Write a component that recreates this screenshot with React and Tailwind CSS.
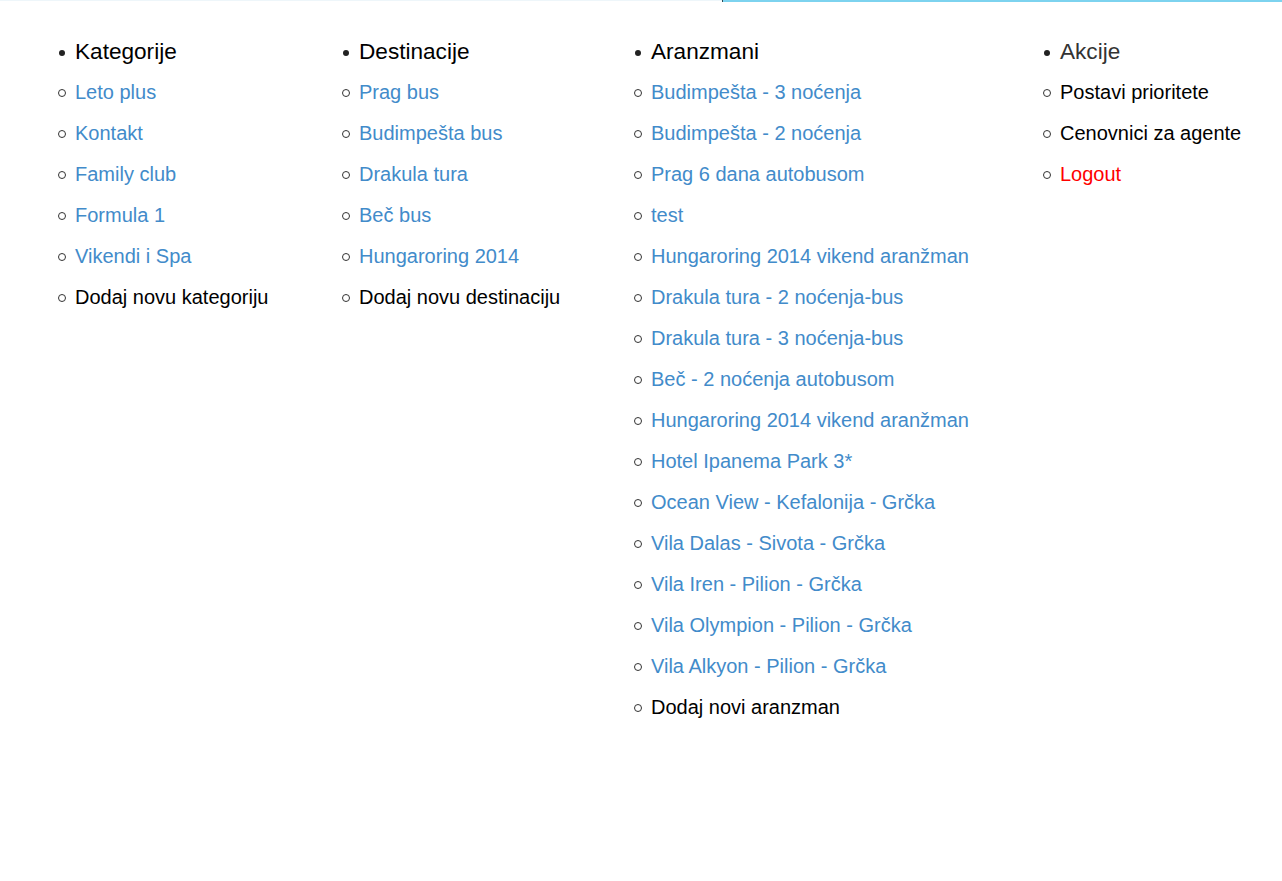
import React from "react";

const columns = [
  {
    title: "Kategorije",
    width: "w-[284px]",
    items: [
      { label: "Leto plus", link: true },
      { label: "Kontakt", link: true },
      { label: "Family club", link: true },
      { label: "Formula 1", link: true },
      { label: "Vikendi i Spa", link: true },
      { label: "Dodaj novu kategoriju" },
    ],
  },
  {
    title: "Destinacije",
    width: "w-[292px]",
    items: [
      { label: "Prag bus", link: true },
      { label: "Budimpešta bus", link: true },
      { label: "Drakula tura", link: true },
      { label: "Beč bus", link: true },
      { label: "Hungaroring 2014", link: true },
      { label: "Dodaj novu destinaciju" },
    ],
  },
  {
    title: "Aranzmani",
    width: "w-[409px]",
    items: [
      { label: "Budimpešta - 3 noćenja", link: true },
      { label: "Budimpešta - 2 noćenja", link: true },
      { label: "Prag 6 dana autobusom", link: true },
      { label: "test", link: true },
      { label: "Hungaroring 2014 vikend aranžman", link: true },
      { label: "Drakula tura - 2 noćenja-bus", link: true },
      { label: "Drakula tura - 3 noćenja-bus", link: true },
      { label: "Beč - 2 noćenja autobusom", link: true },
      { label: "Hungaroring 2014 vikend aranžman", link: true },
      { label: "Hotel Ipanema Park 3*", link: true },
      { label: "Ocean View - Kefalonija - Grčka", link: true },
      { label: "Vila Dalas - Sivota - Grčka", link: true },
      { label: "Vila Iren - Pilion - Grčka", link: true },
      { label: "Vila Olympion - Pilion - Grčka", link: true },
      { label: "Vila Alkyon - Pilion - Grčka", link: true },
      { label: "Dodaj novi aranzman" },
    ],
  },
  {
    title: "Akcije",
    width: "flex-1",
    titleColor: "text-[#333333]",
    items: [
      { label: "Postavi prioritete" },
      { label: "Cenovnici za agente" },
      { label: "Logout", red: true },
    ],
  },
];

const Column = ({ col }) => (
  <ul className={`${col.width} flex flex-col`}>
    <li className="h-[41px] pt-[4px] flex items-center">
      <span className="w-[17px] flex items-center">
        <span className="ml-[1px] w-[6px] h-[6px] rounded-full bg-[#222]"></span>
      </span>
      <span className={`text-[22.6px] leading-none ${col.titleColor || "text-black"}`}>
        {col.title}
      </span>
    </li>
    {col.items.map((item, i) => (
      <li key={i} className="h-[41px] flex items-center">
        <span className="w-[17px] flex items-center">
          <span className="mt-[2px] w-[8px] h-[8px] rounded-full border border-[#333]"></span>
        </span>
        <a
          href="#"
          className={`text-[20px] leading-none no-underline ${
            item.red ? "text-[#ff0000]" : item.link ? "text-[#428bca]" : "text-black"
          }`}
        >
          {item.label}
        </a>
      </li>
    ))}
  </ul>
);

export default function App() {
  return (
    <div className="min-h-[881px] bg-white font-['Liberation_Sans',Arial,sans-serif]">
      <div className="flex h-[2px]">
        <div className="flex-1 h-px bg-[#eef6fa]"></div>
        <div className="w-[560px] h-[2px] bg-[#7dd3ef] border-l border-[#2d4a55]"></div>
      </div>
      <div className="flex pl-[58px] pt-[28px]">
        {columns.map((col) => (
          <Column key={col.title} col={col} />
        ))}
      </div>
    </div>
  );
}
